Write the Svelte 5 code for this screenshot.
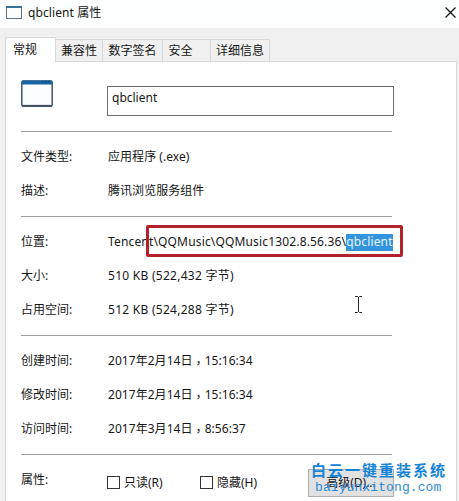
<script lang="ts">
  type Row = { label: string; value: string; wide?: boolean };

  const tabs = [
    { title: '常规', width: 51 },
    { title: '兼容性', width: 47 },
    { title: '数字签名', width: 60 },
    { title: '安全', width: 48 },
    { title: '详细信息', width: 59 }
  ];
  let active = $state(0);

  const fileInfo: Row[] = [
    { label: '文件类型:', value: '应用程序 (.exe)' },
    { label: '描述:', value: '腾讯浏览服务组件' }
  ];
  const sizes: Row[] = [
    { label: '大小:', value: '510 KB (522,432 字节)', wide: true },
    { label: '占用空间:', value: '512 KB (524,288 字节)', wide: true }
  ];
  const times: Row[] = [
    { label: '创建时间:', value: '2017年2月14日，15:16:34' },
    { label: '修改时间:', value: '2017年2月14日，15:16:34' },
    { label: '访问时间:', value: '2017年3月14日，8:56:37' }
  ];
</script>

{#snippet rows(items: Row[])}
  {#each items as item}
    <div class="row">
      <span class="label">{item.label}</span>
      <span class="value" class:wide={item.wide}>
        {#each item.value.split('，') as part, i}{#if i > 0}<span class="comma" lang="zh-TW">，</span>{/if}{part}{/each}
      </span>
    </div>
  {/each}
{/snippet}

<div class="dialog">
  <header class="titlebar">
    <svg class="app-icon" width="16" height="13" viewBox="0 0 16 13">
      <rect x="0.5" y="0.5" width="15" height="12" fill="#fbfdfd" stroke="#64747e" />
      <path d="M0 1h16" stroke="#34719b" stroke-width="2" />
    </svg>
    <span class="title">qbclient 属性</span>
    <button class="close" aria-label="关闭">
      <svg width="11" height="11" viewBox="0 0 11 11">
        <path d="M0.5 0.5l10 10M10.5 0.5l-10 10" stroke="#111" stroke-width="1.2" />
      </svg>
    </button>
  </header>

  <nav class="tabs">
    {#each tabs as tab, i}
      <button class="tab" class:active={active === i} style="width: {tab.width}px" onclick={() => (active = i)}>
        {tab.title}
      </button>
    {/each}
  </nav>

  <main class="panel">
    <div class="name-row">
      <svg class="file-icon" width="32" height="27" viewBox="0 0 32 27">
        <rect x="0.8" y="1" width="30.4" height="25" rx="1.5" fill="#fbfefe" stroke="#3f5566" stroke-width="1.5" />
        <path d="M1 2.5h30" stroke="#1765a5" stroke-width="4" />
        <path d="M21 1.8h8" stroke="#123f70" stroke-dasharray="2 1" />
        <path d="M1 25.8h30" stroke="#344b5e" stroke-width="1.8" />
      </svg>
      <div class="name">qbclient</div>
    </div>

    <section>{@render rows(fileInfo)}</section>

    <section class="place">
      <div class="row">
        <span class="label">位置:</span>
        <span class="path">Tencent\QQMusic\QQMusic1302.8.56.36\<mark>qbclient</mark></span>
        <span class="highlight"></span>
      </div>
      {@render rows(sizes)}
    </section>

    <section>{@render rows(times)}</section>

    <section class="attrs">
      <div class="row">
        <span class="label">属性:</span>
        <label class="check read"><i></i>只读(R)</label>
        <label class="check"><i></i>隐藏(H)</label>
        <button class="advanced">高级(D)...</button>
      </div>
    </section>
  </main>

  <svg class="cursor" width="9" height="17" viewBox="0 0 9 17">
    <path d="M1 0.5h2.5l1 1l1-1H8M4.5 1v15M1 16.5h2.5l1-1l1 1H8" fill="none" stroke="#222" />
  </svg>

  <div class="watermark">
    <div class="brand">白云一键重装系统</div>
    <div class="site">baiyunxitong.com</div>
  </div>
</div>

<style>
  :global(body) {
    overflow: hidden;
  }

  .dialog {
    position: relative;
    box-sizing: border-box;
    width: 459px;
    height: 501px;
    overflow: hidden;
    display: flex;
    flex-direction: column;
    background: #f0f0f0;
    color: #161616;
    font: 12px/16px 'Noto Sans', 'Noto Sans CJK SC', sans-serif;
    white-space: nowrap;
  }

  button {
    font: inherit;
    color: inherit;
    padding: 0;
  }

  .titlebar {
    flex: none;
    display: flex;
    align-items: center;
    height: 28px;
    padding: 0 3px 3px 6px;
    box-sizing: border-box;
    background: #fdfffe;
  }

  .title {
    flex: 1;
    margin-left: 6px;
    letter-spacing: 0.1px;
  }

  .close {
    display: flex;
    border: none;
    background: none;
  }

  .tabs {
    flex: none;
    display: flex;
    align-items: flex-end;
    height: 33px;
    padding-left: 5px;
  }

  .tab {
    box-sizing: border-box;
    height: 22px;
    border: 1px solid #d9d9d9;
    border-left: none;
    border-bottom: none;
    background: #f0f0f0;
  }

  .tab:nth-child(4) {
    padding-right: 12px;
  }

  .tab.active {
    height: 25px;
    margin-bottom: -1px;
    padding: 0 11px 1px 0;
    border-left: 1px solid #d9d9d9;
    background: #fff;
    z-index: 1;
  }

  .panel {
    flex: 1;
    width: 452px;
    box-sizing: border-box;
    margin-left: 5px;
    padding: 0 63px 0 15px;
    border: 1px solid #d9d9d9;
    border-bottom: none;
    background: #fff;
  }

  .name-row {
    display: flex;
    height: 69px;
  }

  .file-icon {
    flex: none;
    margin-top: 18px;
  }

  .name {
    flex: none;
    box-sizing: border-box;
    width: 287px;
    height: 30px;
    margin: 24px 0 0 54px;
    padding: 3px 4px;
    border: 1px solid #6f6f6f;
  }

  section {
    width: 371px;
    box-sizing: border-box;
    height: 119px;
    padding-top: 8px;
    border-top: 1px solid #9a9f9d;
  }

  .name-row + section {
    height: 85px;
  }

  .row {
    position: relative;
    display: flex;
    align-items: center;
    height: 34px;
  }

  .label {
    flex: none;
    width: 87px;
  }

  .value {
    letter-spacing: 0.05px;
  }

  .value.wide {
    letter-spacing: 0.27px;
  }

  .comma {
    font-family: 'Noto Sans CJK TC', sans-serif;
    line-height: 1;
    vertical-align: -3px;
  }

  .path {
    letter-spacing: 0.16px;
  }

  mark {
    display: inline-block;
    height: 17px;
    background: #3393df;
    color: #e4f3ff;
  }

  .highlight {
    position: absolute;
    left: 125px;
    top: 0;
    width: 257px;
    height: 32px;
    box-sizing: border-box;
    border: 3px solid #b3222b;
    border-radius: 2px;
  }

  .check {
    display: flex;
    align-items: center;
    gap: 4px;
    margin-top: 5px;
  }

  .check.read {
    width: 93px;
  }

  .check i {
    box-sizing: border-box;
    width: 13px;
    height: 13px;
    margin-left: -1px;
    border: 1px solid #333;
  }

  .advanced {
    width: 86px;
    height: 28px;
    flex: none;
    margin: 5px -2px 0 auto;
    border: 1px solid #adadad;
    background: #e1e1e1;
  }

  .cursor {
    position: absolute;
    left: 354px;
    top: 296px;
  }

  .watermark {
    position: absolute;
    left: 311px;
    top: 461px;
    color: #1684d8;
  }

  .brand {
    font: bold 15px/18px 'Noto Sans CJK SC', sans-serif;
    letter-spacing: 2px;
  }

  .site {
    margin-left: 4px;
    font: 13px/17px 'Liberation Mono', monospace;
    letter-spacing: 0.1px;
    color: #2c8bdc;
  }
</style>
